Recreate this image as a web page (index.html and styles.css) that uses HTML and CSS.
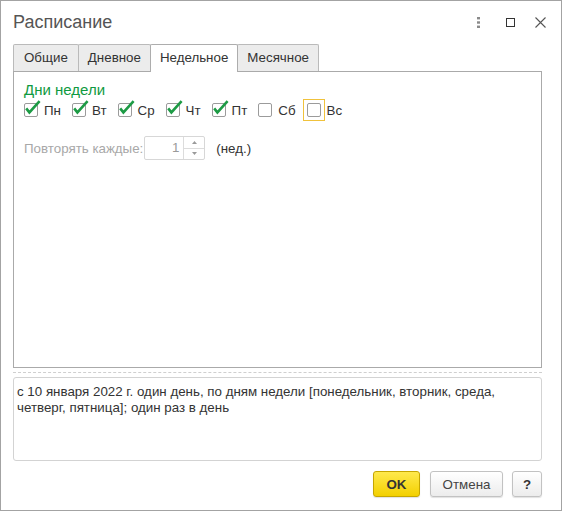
FILE: index.html
```html
<!DOCTYPE html>
<html lang="ru">
<head>
<meta charset="utf-8">
<title>Расписание</title>
<link rel="stylesheet" href="styles.css">
</head>
<body>
<div class="window">
  <div class="titlebar">
    <div class="title">Расписание</div>
    <div class="title-icons">
      <svg class="ic-dots" width="3" height="11" viewBox="0 0 3 11"><rect x="0" y="0" width="3" height="2.4" fill="#8a8a8a"/><rect x="0" y="4.3" width="3" height="2.4" fill="#8a8a8a"/><rect x="0" y="8.6" width="3" height="2.4" fill="#8a8a8a"/></svg>
      <svg class="ic-max" width="9" height="9" viewBox="0 0 9 9"><rect x="0.5" y="0.5" width="8" height="8" fill="none" stroke="#333" stroke-width="1"/></svg>
      <svg class="ic-close" width="11" height="11" viewBox="0 0 11 11"><path d="M0.5 0.5L10.5 10.5M10.5 0.5L0.5 10.5" stroke="#555" stroke-width="1.1" fill="none"/></svg>
    </div>
  </div>

  <div class="tabs">
    <div class="tab">Общие</div>
    <div class="tab">Дневное</div>
    <div class="tab active">Недельное</div>
    <div class="tab">Месячное</div>
  </div>

  <div class="panel">
    <div class="group-title">Дни недели</div>
    <div class="days">
      <div class="day"><span class="cb-wrap"><span class="cb checked"><svg class="tick" width="18" height="18" viewBox="0 0 18 18"><path d="M2.2 9.4L5.4 13.4L15.6 2.2" fill="none" stroke="#1d9b45" stroke-width="2.6"/></svg></span></span><span class="cb-label">Пн</span></div>
      <div class="day"><span class="cb-wrap"><span class="cb checked"><svg class="tick" width="18" height="18" viewBox="0 0 18 18"><path d="M2.2 9.4L5.4 13.4L15.6 2.2" fill="none" stroke="#1d9b45" stroke-width="2.6"/></svg></span></span><span class="cb-label">Вт</span></div>
      <div class="day"><span class="cb-wrap"><span class="cb checked"><svg class="tick" width="18" height="18" viewBox="0 0 18 18"><path d="M2.2 9.4L5.4 13.4L15.6 2.2" fill="none" stroke="#1d9b45" stroke-width="2.6"/></svg></span></span><span class="cb-label">Ср</span></div>
      <div class="day"><span class="cb-wrap"><span class="cb checked"><svg class="tick" width="18" height="18" viewBox="0 0 18 18"><path d="M2.2 9.4L5.4 13.4L15.6 2.2" fill="none" stroke="#1d9b45" stroke-width="2.6"/></svg></span></span><span class="cb-label">Чт</span></div>
      <div class="day"><span class="cb-wrap"><span class="cb checked"><svg class="tick" width="18" height="18" viewBox="0 0 18 18"><path d="M2.2 9.4L5.4 13.4L15.6 2.2" fill="none" stroke="#1d9b45" stroke-width="2.6"/></svg></span></span><span class="cb-label">Пт</span></div>
      <div class="day"><span class="cb-wrap"><span class="cb"></span></span><span class="cb-label">Сб</span></div>
      <div class="day"><span class="cb-wrap focused"><span class="cb"></span></span><span class="cb-label">Вс</span></div>
    </div>

    <div class="repeat">
      <span class="repeat-label">Повторять каждые:</span>
      <div class="spinner">
        <span class="spin-value">1</span>
        <span class="spin-btns">
          <span class="spin-up"><svg width="5" height="3" viewBox="0 0 5 3"><path d="M0 3L2.5 0L5 3Z" fill="#9a9a9a"/></svg></span>
          <span class="spin-down"><svg width="5" height="3" viewBox="0 0 5 3"><path d="M0 0L2.5 3L5 0Z" fill="#9a9a9a"/></svg></span>
        </span>
      </div>
      <span class="unit">(нед.)</span>
    </div>
  </div>

  <div class="separator"></div>

  <div class="summary">с 10 января 2022 г. один день, по дням недели [понедельник, вторник, среда, четверг, пятница]; один раз в день</div>

  <div class="buttons">
    <button class="btn btn-ok">OK</button>
    <button class="btn btn-cancel">Отмена</button>
    <button class="btn btn-help">?</button>
  </div>
</div>
</body>
</html>
```

FILE: styles.css
```css
* { box-sizing: border-box; }

html, body {
  margin: 0;
  padding: 0;
  background: #fff;
}

body {
  font-family: "Liberation Sans", Arial, sans-serif;
  font-size: 13.33px;
  color: #333;
}

.window {
  width: 562px;
  height: 511px;
  border: 1px solid #a3a3a3;
  background: #fff;
  padding: 0 19px 0 12px;
  display: flex;
  flex-direction: column;
}

.titlebar {
  height: 43px;
  display: flex;
  align-items: center;
  flex-shrink: 0;
}

.title {
  font-size: 18px;
  line-height: 43px;
  color: #555;
  flex: 1;
}

.title-icons {
  display: flex;
  align-items: center;
  margin-right: -4px;
}

.ic-dots { display: block; margin-top: -1px; }
.ic-max { display: block; margin-left: 26px; margin-top: -1px; }
.ic-close { display: block; margin-left: 20px; margin-top: -1px; }

.tabs {
  display: flex;
  align-items: flex-end;
  height: 27px;
  flex-shrink: 0;
}

.tab {
  height: 27px;
  line-height: 26px;
  padding: 0 9px;
  border: 1px solid #bababa;
  border-bottom: none;
  border-radius: 2px 2px 0 0;
  background: #ececec;
  color: #333;
  margin-left: -1px;
  white-space: nowrap;
}

.tab:first-child { margin-left: 0; padding: 0 10px; }

.tab.active {
  background: #fff;
  height: 28px;
  margin-bottom: -1px;
  position: relative;
  z-index: 1;
  border-color: #adadad;
}

.panel {
  height: 297px;
  flex-shrink: 0;
  border: 1px solid #aaaaaa;
  padding: 9px 10px 0 10px;
}

.group-title {
  font-size: 15px;
  line-height: 18px;
  color: #0f9a41;
}

.days {
  display: flex;
  align-items: center;
  gap: 7px;
  margin-left: -4px;
  height: 22px;
}

.day {
  display: flex;
  align-items: center;
}

.cb-wrap {
  width: 22px;
  height: 22px;
  border: 1px solid transparent;
  display: flex;
  align-items: center;
  justify-content: center;
}

.cb-wrap.focused {
  border-color: #f0c23c;
}

.cb {
  width: 14px;
  height: 14px;
  border: 1px solid #9b9b9b;
  border-radius: 2px;
  background: #fff;
  position: relative;
}

.tick {
  position: absolute;
  left: -1px;
  top: -5px;
}

.cb-label {
  margin-left: 2px;
  line-height: 22px;
  padding-top: 1px;
  color: #333;
}

.repeat {
  display: flex;
  align-items: center;
  margin-top: 15px;
  height: 24px;
}

.repeat-label {
  color: #a8a8a8;
  margin-right: 1px;
}

.spinner {
  width: 61px;
  height: 24px;
  border: 1px solid #d7d7d7;
  border-radius: 2px;
  display: flex;
}

.spin-value {
  flex: 1;
  text-align: right;
  padding-right: 4px;
  line-height: 22px;
  color: #9a9a9a;
}

.spin-btns {
  width: 21px;
  border-left: 1px solid #dcdcdc;
  display: flex;
  flex-direction: column;
}

.spin-up, .spin-down {
  flex: 1;
  display: flex;
  align-items: center;
  justify-content: center;
}

.spin-up { border-bottom: 1px solid #dcdcdc; }
.spin-up svg, .spin-down svg { display: block; }

.unit {
  margin-left: 11px;
  color: #333;
}

.separator {
  margin-top: 4px;
  border-top: 1px dashed #cfcfcf;
  flex-shrink: 0;
}

.summary {
  margin-top: 4px;
  height: 84px;
  flex-shrink: 0;
  border: 1px solid #d3d3d3;
  border-radius: 3px;
  padding: 6px 6px 0 3px;
  line-height: 16px;
  color: #333;
}

.buttons {
  margin-top: 10px;
  display: flex;
  justify-content: flex-end;
  flex-shrink: 0;
}

.btn {
  height: 26px;
  font-family: "Liberation Sans", Arial, sans-serif;
  font-size: 13.33px;
  border-radius: 3px;
  padding: 0;
  color: #444;
  cursor: pointer;
}

.btn-ok {
  width: 47px;
  font-weight: bold;
  color: #333;
  background: linear-gradient(#ffe94d, #f3d000);
  border: 1px solid #c6a600;
  box-shadow: 0 1px 1px rgba(0,0,0,0.12);
}

.btn-cancel {
  width: 73px;
  margin-left: 10px;
  background: linear-gradient(#ffffff, #ececec);
  border: 1px solid #c2c2c2;
  box-shadow: 0 1px 1px rgba(0,0,0,0.12);
}

.btn-help {
  width: 30px;
  margin-left: 9px;
  font-weight: bold;
  color: #333;
  background: linear-gradient(#ffffff, #ececec);
  border: 1px solid #c2c2c2;
  box-shadow: 0 1px 1px rgba(0,0,0,0.12);
}
```
